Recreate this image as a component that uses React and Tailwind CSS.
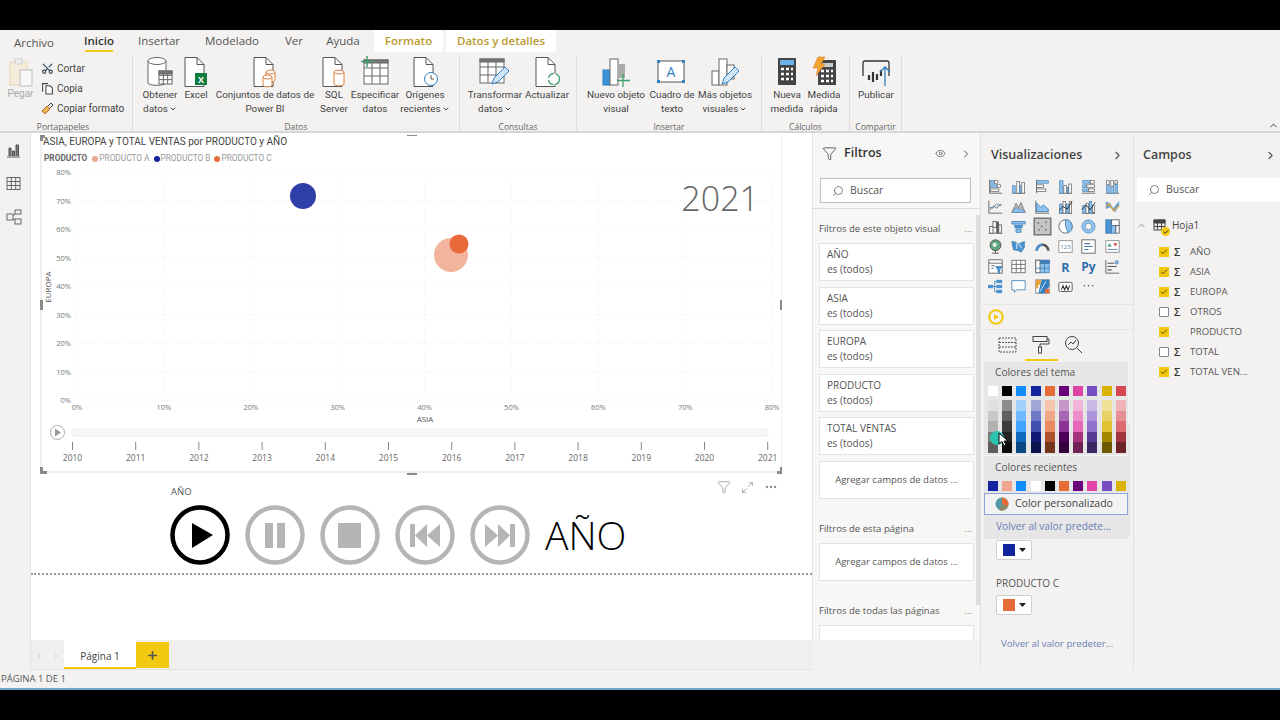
import { ChevronRight, ChevronUp, ChevronDown, Search, Filter, Eye, Check, Scissors, Plus, MoreHorizontal, Maximize2 } from 'lucide-react';

const font = { fontFamily: '"Open Sans", "Noto Sans", sans-serif' };
const narrow = { fontFamily: 'Roboto, "Open Sans", sans-serif' };

function Doc({ children }) {
  return (
    <svg width="36" height="32" viewBox="0 0 36 32" fill="none">
      <path d="M7 1.5h12l7 7v22H7z" fill="#fff" stroke="#555" />
      <path d="M19 1.5v7h7" stroke="#555" />
      {children}
    </svg>
  );
}

const Cyl = ({ x, y, w = 9, h = 11, c = '#d9803f' }) => (
  <g stroke={c} fill="#fff">
    <path d={`M${x} ${y + 2}v${h - 3}c0 2.5 ${w} 2.5 ${w} 0v-${h - 3}`} />
    <ellipse cx={x + w / 2} cy={y + 2} rx={w / 2} ry="2" />
  </g>
);

const TableGrid = ({ x = 4, y = 4, w = 24, h = 22 }) => (
  <g stroke="#666" fill="#fff">
    <rect x={x} y={y} width={w} height={h} />
    <path d={`M${x} ${y + h / 3}h${w}M${x} ${y + (2 * h) / 3}h${w}M${x + w / 3} ${y}v${h}M${x + (2 * w) / 3} ${y}v${h}`} />
    <rect x={x} y={y} width={w} height="3" fill="#777" />
  </g>
);

const Pencil = () => <path d="M15 28l2-6 11-11 4 4-11 11z" fill="#cfe4f7" stroke="#2f7fc1" />;

const Svg32 = ({ children }) => (
  <svg width="36" height="32" viewBox="0 0 36 32" fill="none">{children}</svg>
);

const ribbonIcons = {
  obtener: (
    <Svg32>
      <path d="M6 5v22c0 3 18 3 18 0V5" fill="#fff" stroke="#666" />
      <ellipse cx="15" cy="5" rx="9" ry="3.5" fill="#fff" stroke="#666" />
      <TableGrid x={17} y={15} w={13} h={13} />
    </Svg32>
  ),
  excel: (
    <Doc>
      <rect x="17" y="17" width="12" height="12" fill="#107c41" />
      <text x="23" y="26.5" textAnchor="middle" fontSize="9" fontWeight="700" fill="#fff">X</text>
    </Doc>
  ),
  conjuntos: <Doc><Cyl x={19} y={14} /><Cyl x={16} y={19} /></Doc>,
  sql: <Doc><Cyl x={18} y={14} w={10} h={15} /></Doc>,
  especificar: (
    <Svg32>
      <TableGrid x={7} y={4} w={24} h={24} />
      <path d="M10 0v11M4 5.500h12" stroke="#3fa06d" strokeWidth="1.500" />
    </Svg32>
  ),
  origenes: (
    <Doc>
      <circle cx="24" cy="23" r="6.500" fill="#fff" stroke="#2f7fc1" />
      <path d="M24 19v4h3" stroke="#555" />
    </Doc>
  ),
  transformar: <Svg32><TableGrid x={3} y={3} w={24} h={24} /><Pencil /></Svg32>,
  actualizar: (
    <Doc>
      <circle cx="25" cy="23" r="5.500" fill="#fff" stroke="#3fa06d" strokeDasharray="7 2" strokeWidth="1.300" />
    </Doc>
  ),
  nuevo: (
    <Svg32>
      <rect x="5" y="14" width="7" height="15" fill="#3d93d8" stroke="#2f7fc1" />
      <rect x="12" y="3" width="8" height="26" fill="#fff" stroke="#666" />
      <rect x="20" y="8" width="7" height="14" fill="#aaa" />
      <path d="M25 18v13M19 24.500h13" stroke="#3fa06d" strokeWidth="1.300" />
    </Svg32>
  ),
  cuadro: (
    <Svg32>
      <rect x="4" y="5" width="26" height="21" fill="#fff" stroke="#555" />
      <g fill="#2f7fc1"><rect x="3" y="4" width="3" height="3" /><rect x="28" y="4" width="3" height="3" /><rect x="3" y="24" width="3" height="3" /><rect x="28" y="24" width="3" height="3" /></g>
      <text x="17" y="21" textAnchor="middle" fontSize="14" fill="#2f7fc1">A</text>
    </Svg32>
  ),
  mas: (
    <Svg32>
      <rect x="5" y="15" width="7" height="14" fill="#fff" stroke="#666" />
      <rect x="12" y="3" width="8" height="26" fill="#fff" stroke="#666" />
      <rect x="20" y="9" width="7" height="14" fill="#fff" stroke="#666" />
      <Pencil />
    </Svg32>
  ),
  nueva: (
    <Svg32>
      <rect x="9" y="2" width="18" height="27" fill="#444" />
      <rect x="11" y="4" width="14" height="5" fill="#6cb2e8" />
      <path d="M12 13h3M17 13h3M22 13h2M12 18h3M17 18h3M22 18h2M12 23h3M17 23h3M22 23h2" stroke="#fff" strokeWidth="2.500" />
    </Svg32>
  ),
  medida: (
    <Svg32>
      <rect x="12" y="4" width="18" height="25" fill="#444" />
      <rect x="16" y="7" width="11" height="4" fill="#ccc" />
      <path d="M15 15h3M20 15h3M25 15h2M15 20h3M20 20h3M25 20h2M15 25h3M20 25h3M25 25h2" stroke="#fff" strokeWidth="2.500" />
      <path d="M12 1h7l-4 7h4l-9 12 2-8H7z" fill="#f2a52c" stroke="#d9803f" strokeWidth=".6" />
    </Svg32>
  ),
  publicar: (
    <Svg32>
      <path d="M5 20V7q0-2 2-2h22q2 0 2 2v13" stroke="#333" strokeWidth="1.300" />
      <path d="M11 24v-5M15 26v-10M19 24v-6M23 20v-6" stroke="#333" strokeWidth="2.200" />
      <path d="M27 30V12M22 16l5-5 5 5" stroke="#2f7fc1" strokeWidth="1.300" />
    </Svg32>
  ),
};

const groups = [
  { label: 'Datos', w: 'w-[327px]', pl: 'pl-[5px]', items: [
    { k: 'obtener', w: 'w-[44px]', t: ['Obtener', 'datos'], c: true },
    { k: 'excel', w: 'w-[28px]', t: ['Excel'] },
    { k: 'conjuntos', w: 'w-[110px]', t: ['Conjuntos de datos de', 'Power BI'] },
    { k: 'sql', w: 'w-[28px]', t: ['SQL', 'Server'] },
    { k: 'especificar', w: 'w-[54px]', t: ['Especificar', 'datos'] },
    { k: 'origenes', w: 'w-[46px]', t: ['Orígenes', 'recientes'], c: true },
  ] },
  { label: 'Consultas', w: 'w-[117px]', pl: 'pl-[4px]', items: [
    { k: 'transformar', w: 'w-[62px]', t: ['Transformar', 'datos'], c: true },
    { k: 'actualizar', w: 'w-[42px]', t: ['Actualizar'] },
  ] },
  { label: 'Insertar', w: 'w-[185px]', pl: 'pl-[6px]', items: [
    { k: 'nuevo', w: 'w-[66px]', t: ['Nuevo objeto', 'visual'] },
    { k: 'cuadro', w: 'w-[46px]', t: ['Cuadro de', 'texto'] },
    { k: 'mas', w: 'w-[60px]', t: ['Más objetos', 'visuales'], c: true },
  ] },
  { label: 'Cálculos', w: 'w-[88px]', pl: 'pl-[7px]', items: [
    { k: 'nueva', w: 'w-[36px]', t: ['Nueva', 'medida'] },
    { k: 'medida', w: 'w-[38px]', t: ['Medida', 'rápida'] },
  ] },
  { label: 'Compartir', w: 'w-[52px]', pl: 'pl-[4px]', items: [
    { k: 'publicar', w: 'w-[44px]', t: ['Publicar'] },
  ] },
];

function RibbonButton({ item }) {
  return (
    <div className={`${item.w} flex flex-col items-center shrink-0`}>
      <div className="h-[28px] mt-[3px] flex items-center justify-center">{ribbonIcons[item.k]}</div>
      <div className="mt-[2px] text-[9.900px] leading-[14px] text-[#444] text-center whitespace-nowrap" style={narrow}>
        {item.t.map((line, i) => (
          <div key={line} className="flex items-center justify-center">
            {line}
            {item.c && i === item.t.length - 1 && <ChevronDown className="w-[8px] h-[8px] ml-[1px]" strokeWidth={3} />}
          </div>
        ))}
      </div>
    </div>
  );
}

function RibbonGroup({ group }) {
  return (
    <div className={`${group.w} shrink-0 h-[77px] border-r border-[#dcdcdc] flex flex-col`}>
      <div className={`${group.pl} flex flex-1 items-start`}>
        {group.items.map(item => <RibbonButton key={item.k} item={item} />)}
      </div>
      <div className="text-center text-[8.500px] leading-[12px] text-[#666] translate-y-[1px]">{group.label}</div>
    </div>
  );
}

function Ribbon() {
  const tabs = [
    ['Archivo', 'w-[68px] text-[#555] pt-[3px]'],
    ['Inicio', 'w-[62px] text-[#333] font-semibold'],
    ['Insertar', 'w-[58px]'],
    ['Modelado', 'w-[88px]'],
    ['Ver', 'w-[36px]'],
    ['Ayuda', 'w-[62px]'],
  ];
  return (
    <div className="h-[103px] shrink-0 bg-[#f3f2f1] border-b-2 border-[#d6d6d6]">
      <div className="h-[22px] flex items-center text-[11.500px] text-[#555]">
        {tabs.map(([name, cls]) => (
          <div key={name} className={`${cls} relative h-full flex items-center justify-center`}>
            {name}
            {name === 'Inicio' && <div className="absolute bottom-[0px] left-[17px] w-[28px] h-[2px] bg-[#f2c811]" />}
          </div>
        ))}
        <div className="w-[69px] h-full bg-white flex items-center justify-center font-semibold text-[#b89a2d]">Formato</div>
        <div className="ml-[3px] w-[110px] h-full bg-white flex items-center justify-center font-semibold text-[#b89a2d]">Datos y detalles</div>
      </div>
      <div className="flex pt-[3px]">
        <div className="w-[133px] shrink-0 h-[77px] border-r border-[#dcdcdc] flex flex-col">
          <div className="flex flex-1">
            <div className="w-[41px] flex flex-col items-center pt-[3px]">
              <svg width="26" height="30" viewBox="0 0 26 30" fill="none">
                <rect x="2" y="4" width="17" height="23" fill="#f5ecdc" stroke="#e4d3b5" />
                <rect x="7" y="1" width="7" height="5" fill="#eee" stroke="#ccc" />
                <rect x="12" y="12" width="12" height="16" fill="#f7f7f7" stroke="#bbb" />
              </svg>
              <div className="text-[10px] leading-[14px] text-[#aaa] -mt-[1px]" style={narrow}>Pegar</div>
            </div>
            <div className="flex flex-col text-[10px] text-[#444] pt-[6px] gap-[6px]" style={narrow}>
              <div className="h-[14px] flex items-center gap-[3px]"><Scissors className="w-[13px] h-[13px] -rotate-90 text-[#345]" /><span>Cortar</span></div>
              <div className="h-[14px] flex items-center gap-[3px]">
                <svg width="13" height="13" viewBox="0 0 12 12" fill="none" stroke="#444"><path d="M1.500 9V1.500h5M4.500 3.500h4l2 2v5.500h-6z" fill="#fff" /></svg>
                <span>Copia</span>
              </div>
              <div className="h-[14px] flex items-center gap-[3px]">
                <svg width="13" height="13" viewBox="0 0 13 13" fill="none"><path d="M1 9l5-5 3 3-5 5z" fill="#f0b65a" stroke="#a86f1e" /><path d="M7 4l3-3 2 2-3 3" stroke="#444" /></svg>
                <span>Copiar formato</span>
              </div>
            </div>
          </div>
          <div className="text-center text-[8.500px] leading-[12px] text-[#666] pr-[6px] translate-y-[1px]">Portapapeles</div>
        </div>
        {groups.map(g => <RibbonGroup key={g.label} group={g} />)}
        <div className="flex-1 relative">
          <ChevronUp className="absolute right-[1px] bottom-[1px] w-[11px] h-[11px] text-[#333]" strokeWidth={2} />
        </div>
      </div>
    </div>
  );
}

function LeftRail() {
  return (
    <div className="w-[31px] shrink-0 bg-[#f3f2f1] border-r border-[#e3e3e3] flex flex-col items-center pt-[10px] pr-[3px] gap-[18px]">
      <svg width="15" height="15" viewBox="0 0 15 15" fill="none" stroke="#555"><path d="M1 14h13" /><path d="M3 13V5h2v8M6.500 13V8h2v5M10 13V2h2.500v11" fill="#777" /></svg>
      <svg width="15" height="15" viewBox="0 0 15 15" fill="none" stroke="#666"><rect x="1" y="1.500" width="13" height="12" /><path d="M1 5.500h13M1 9.500h13M5.300 1.500v12M9.700 1.500v12" /></svg>
      <svg width="16" height="16" viewBox="0 0 16 16" fill="none" stroke="#666"><rect x="9" y="1" width="6" height="4" /><rect x="1" y="5" width="6" height="6" /><rect x="9" y="10" width="6" height="5" /><path d="M7 7l2-2M7 9l2 2" /></svg>
    </div>
  );
}

const xTicks = ['0%', '10%', '20%', '30%', '40%', '50%', '60%', '70%', '80%'];
const yTicks = ['80%', '70%', '60%', '50%', '40%', '30%', '20%', '10%', '0%'];
const years = ['2010', '2011', '2012', '2013', '2014', '2015', '2016', '2017', '2018', '2019', '2020', '2021'];

function Chart() {
  return (
    <div className="relative ml-[9px] mt-[2px] w-[742px] h-[340px] shrink-0">
      <svg className="absolute inset-0" width="742" height="340" viewBox="40 135 742 340" fill="none" style={font}>
        <path d="M41 135V472H782V135" stroke="#dedede" />
        <path d="M40 135h5v3h-2v3h-3zM40 467h3v4h4v3h-7zM777 471h3v-4h3v7h-6zM407 133h10v3h-10zM407 473h10v3h-10zM40 300h3v10h-3zM780 300h3v10h-3z" fill="#8a8a8a" />
        {xTicks.map((t, i) => (
          <g key={t}>
            <path d={`M${77 + i * 86.9} 172V400`} stroke="#f0f0f0" strokeDasharray="1 2" />
            <text x={77 + i * 86.9} y="410" textAnchor="middle" fontSize="7.500" fill="#777">{t}</text>
          </g>
        ))}
        {yTicks.map((t, i) => (
          <g key={t}>
            <path d={`M77 ${172 + i * 28.5}H772`} stroke="#f0f0f0" strokeDasharray="1 2" />
            <text x="71" y={175 + i * 28.5} textAnchor="end" fontSize="7.500" fill="#777">{t}</text>
          </g>
        ))}
        <text x="425" y="422" textAnchor="middle" fontSize="8" fill="#555">ASIA</text>
        <text transform="translate(51 287) rotate(-90)" textAnchor="middle" fontSize="8" fill="#555">EUROPA</text>
        <circle cx="303" cy="196" r="13" fill="#2e3fa8" />
        <circle cx="451" cy="255" r="17" fill="#f2b49c" />
        <circle cx="459" cy="244" r="9.500" fill="#e8693a" />
        <text x="759" y="211" textAnchor="end" fontSize="34" fontWeight="300" fill="#666">2021</text>
        <circle cx="57.500" cy="432.500" r="7" fill="#fff" stroke="#aaa" />
        <path d="M55 428.500l6 4-6 4z" fill="#999" />
        <rect x="72" y="429" width="696" height="7" rx="3" fill="#f7f7f7" stroke="#ececec" />
        {years.map((y, i) => (
          <g key={y}>
            <path d={`M${72.500 + i * 63.200} 442v8`} stroke="#888" />
            <text x={72.500 + i * 63.200} y="461" textAnchor="middle" fontSize="8.500" fill="#666">{y}</text>
          </g>
        ))}
      </svg>
      <div className="relative pl-[3px] text-[10px] leading-[13px] text-[#444] whitespace-nowrap" style={narrow}>
        ASIA, EUROPA y TOTAL VENTAS por PRODUCTO y AÑO
      </div>
      <div className="relative pl-[4px] mt-[5px] flex items-center text-[8.300px] leading-[11px] text-[#999]" style={narrow}>
        <span className="font-bold text-[#666] mr-[5px]">PRODUCTO</span>
        <span className="w-[6px] h-[6px] rounded-full bg-[#e8a792] mr-[1px]" /><span className="mr-[4px]">PRODUCTO A</span>
        <span className="w-[6px] h-[6px] rounded-full bg-[#12239e] mr-[1px]" /><span className="mr-[4px]">PRODUCTO B</span>
        <span className="w-[6px] h-[6px] rounded-full bg-[#e66c37] mr-[1px]" /><span>PRODUCTO C</span>
      </div>
    </div>
  );
}

function Round({ color, children }) {
  return (
    <svg width="60" height="60" viewBox="0 0 60 60" fill="none">
      <circle cx="30" cy="30" r="27.500" fill="#fff" stroke={color} strokeWidth="4.500" />
      <g fill={color}>{children}</g>
    </svg>
  );
}

function Slicer() {
  return (
    <div className="relative">
      <div className="absolute left-[686px] top-[5px] flex items-center gap-[10px] text-[#888]">
        <Filter className="w-[14px] h-[14px]" strokeWidth={1.200} />
        <Maximize2 className="w-[13px] h-[13px]" strokeWidth={1.200} />
        <MoreHorizontal className="w-[14px] h-[14px]" />
      </div>
      <div className="ml-[140px] pt-[10px] text-[9.500px] leading-[14px] text-[#555]">AÑO</div>
      <div className="ml-[139px] mt-[6px] flex items-center gap-[15px] h-[60px]">
        <Round color="#000"><path d="M22 18l21 12-21 13z" /></Round>
        <Round color="#b5b5b5"><rect x="20" y="18" width="8" height="25" /><rect x="32" y="18" width="8" height="25" /></Round>
        <Round color="#b5b5b5"><rect x="18" y="18" width="23" height="25" /></Round>
        <Round color="#b5b5b5"><rect x="15" y="19" width="5" height="23" /><path d="M32 19v23l-12-11.500zM45 19v23l-13-11.500z" /></Round>
        <Round color="#b5b5b5"><rect x="40" y="19" width="5" height="23" /><path d="M28 19v23l12-11.500zM15 19v23l13-11.500z" /></Round>
        <span className="text-[39px] leading-none font-light text-black -translate-y-[1px]" style={font}>AÑO</span>
      </div>
      <div className="mt-[8px] border-t-2 border-dotted border-[#999]" />
    </div>
  );
}

function PageTabs() {
  return (
    <div className="h-[30px] shrink-0 bg-[#f0efee] flex items-stretch border-b border-[#e4e4e4]">
      <div className="w-[33px] flex items-center justify-center gap-[9px] text-[#ccc] pt-[3px]">
        <ChevronRight className="w-[8px] h-[8px] rotate-180" strokeWidth={3} />
        <ChevronRight className="w-[8px] h-[8px]" strokeWidth={3} />
      </div>
      <div className="w-[72px] bg-white border-b-2 border-[#f2c811] flex items-center justify-center pt-[5px] text-[10px] text-[#444]">Página 1</div>
      <div className="w-[33px] mt-[2px] mb-[1px] bg-[#f2c811] flex items-center justify-center">
        <Plus className="w-[13px] h-[13px] text-[#555]" strokeWidth={3} />
      </div>
    </div>
  );
}

function FilterCard({ title, add }) {
  if (add) {
    return <div className="h-[38px] shrink-0 bg-white border border-[#e3e3e3] flex items-center justify-center text-[9.500px] text-[#555] whitespace-nowrap">Agregar campos de datos ...</div>;
  }
  return (
    <div className="h-[38px] shrink-0 bg-white border border-[#e3e3e3] pl-[7px] pt-[3px] text-[10px] leading-[15px] text-[#555]">
      <div>{title}</div>
      <div>es (todos)</div>
    </div>
  );
}

const FilterHeading = ({ children }) => (
  <div className="flex justify-between pr-[2px] h-[14px] items-center text-[9.600px] text-[#555] whitespace-nowrap">
    {children}
    <span className="text-[#888]">...</span>
  </div>
);

function FiltersPane() {
  return (
    <div className="w-[168px] shrink-0 border-l border-[#e3e3e3] bg-[#f7f7f6] flex flex-col h-[507px] relative">
      <div className="h-[40px] shrink-0 flex items-center pl-[9px] pr-[8px] pt-[1px]">
        <Filter className="w-[15px] h-[15px] text-[#444]" strokeWidth={1.300} />
        <span className="ml-[7px] text-[12.500px] font-semibold text-[#333] flex-1">Filtros</span>
        <Eye className="w-[11px] h-[11px] text-[#777] mr-[14px]" />
        <ChevronRight className="w-[12px] h-[12px] text-[#555]" />
      </div>
      <div className="ml-[7px] w-[151px] h-[25px] shrink-0 mt-[5px] bg-white border border-[#bdbdbd] flex items-center pl-[11px] text-[10.500px] text-[#555]">
        <Search className="w-[12px] h-[12px] -scale-x-100 mr-[6px] text-[#444]" strokeWidth={1.300} />Buscar
      </div>
      <div className="mt-[5px] border-t border-[#d9d9d9]" />
      <div className="pl-[6px] pr-[6px] overflow-hidden flex-1">
        <div className="mt-[13px]"><FilterHeading>Filtros de este objeto visual</FilterHeading></div>
        <div className="mt-[7px] flex flex-col gap-[5.600px]">
          {['AÑO', 'ASIA', 'EUROPA', 'PRODUCTO', 'TOTAL VENTAS'].map(t => <FilterCard key={t} title={t} />)}
          <FilterCard add />
        </div>
        <div className="mt-[23px]"><FilterHeading>Filtros de esta página</FilterHeading></div>
        <div className="mt-[7px]"><FilterCard add /></div>
        <div className="mt-[23px]"><FilterHeading>Filtros de todas las páginas</FilterHeading></div>
        <div className="mt-[7px]"><FilterCard add /></div>
      </div>
      <div className="absolute right-[0px] top-[82px] w-[4px] h-[390px] bg-[#dedede]" />
    </div>
  );
}

const B = '#8fc2ee';
const BD = '#3f7fb5';
const G = '#555';
const Bar = ({ x, y, w, h, on = true }) => (
  <rect x={x} y={y} width={w} height={h} fill={on ? B : '#fff'} stroke={on ? BD : G} strokeWidth=".8" />
);
const vizIcons = [
  <g><path d="M2 1v16h15" stroke={G} /><Bar x={3} y={2} w={5} h={3} /><Bar x={8} y={2} w={4} h={3} on={false} /><Bar x={3} y={7} w={8} h={3} /><Bar x={11} y={7} w={4} h={3} on={false} /><Bar x={3} y={12} w={10} h={3} on={false} /></g>,
  <g><path d="M1 17h16" stroke={G} /><Bar x={2} y={8} w={3} h={9} /><Bar x={7} y={3} w={3} h={14} on={false} /><Bar x={10} y={8} w={2} h={9} /><Bar x={13} y={4} w={3} h={13} on={false} /></g>,
  <g><path d="M2 1v16" stroke={G} /><Bar x={2} y={2} w={14} h={3} /><Bar x={2} y={7} w={8} h={3} on={false} /><Bar x={2} y={12} w={11} h={3} on={false} /></g>,
  <g><path d="M1 17h16" stroke={G} /><Bar x={2} y={2} w={4} h={15} /><Bar x={7} y={8} w={3} h={9} on={false} /><Bar x={11} y={10} w={2} h={7} /><Bar x={13} y={6} w={3} h={11} on={false} /></g>,
  <g><path d="M1 17h16" stroke={G} /><Bar x={2} y={2} w={9} h={3} /><Bar x={11} y={2} w={5} h={3} on={false} /><Bar x={2} y={7} w={5} h={3} /><Bar x={7} y={7} w={9} h={3} on={false} /><Bar x={2} y={12} w={7} h={3} /><Bar x={9} y={12} w={7} h={3} on={false} /></g>,
  <g><path d="M1 17h16" stroke={G} /><Bar x={2} y={7} w={3} h={10} /><Bar x={2} y={2} w={3} h={5} on={false} /><Bar x={7} y={9} w={3} h={8} /><Bar x={7} y={2} w={3} h={7} on={false} /><Bar x={12} y={6} w={3} h={11} /><Bar x={12} y={2} w={3} h={4} on={false} /></g>,
  <g fill="none"><path d="M1 2v15h16" stroke={G} /><path d="M2 13l5-5 3 3 6-5" stroke={G} /><path d="M2 10l4 1 4-5 6 2" stroke={BD} /></g>,
  <g><path d="M1 16l5-11 3 5 3-6 5 12z" fill="#b9b9b9" stroke={G} strokeWidth=".7" /><path d="M1 16l5-6 4 3 3-1 4 4z" fill={B} stroke={BD} strokeWidth=".7" /></g>,
  <g fill="none"><path d="M1 2v15h16" stroke={G} /><path d="M2 5l5 5 3-3 6 5v3H2z" fill={B} stroke={BD} /></g>,
  <g><path d="M1 17h16" stroke={G} /><Bar x={2} y={6} w={3} h={11} /><Bar x={6} y={3} w={3} h={14} on={false} /><Bar x={10} y={6} w={3} h={11} /><Bar x={14} y={3} w={2} h={14} on={false} /><path d="M1 14l5-5 5 3 6-9" stroke="#222" fill="none" /></g>,
  <g><path d="M1 17h16" stroke={G} /><Bar x={2} y={8} w={3} h={9} /><Bar x={6} y={5} w={3} h={12} on={false} /><Bar x={10} y={3} w={3} h={14} /><Bar x={14} y={8} w={2} h={9} on={false} /><path d="M1 13l5-6 5 6 6-9" stroke="#222" fill="none" /></g>,
  <g><path d="M1 3l5 2 4 6 7-9v6l-5 8-6-6-5 2z" fill="#5f9fd6" /><path d="M1 9l4-3 5 8 7-6" stroke="#e8a33a" fill="none" strokeWidth="1.500" /></g>,
  <g><path d="M1 17h16" stroke={G} /><rect x="2" y="9" width="4" height="8" fill="#fff" stroke={G} /><rect x="6" y="3" width="4" height="7" fill="#fff" stroke={G} /><rect x="10" y="3" width="3" height="14" fill={G} /><rect x="13" y="7" width="3" height="10" fill="#fff" stroke={G} /></g>,
  <g><path d="M1 3h16v3H1z" fill={B} stroke={BD} /><path d="M3.500 7h11l-1 4h-9z" fill="#4a93d0" /><path d="M6 12h6v4H6z" fill={B} stroke={BD} /></g>,
  <g><rect x="-1" y="-1" width="20" height="20" fill="#c4c4c4" stroke="#666" strokeWidth="1.500" /><g fill="#777"><rect x="3" y="4" width="2" height="2" /><rect x="7" y="8" width="2" height="2" /><rect x="12" y="3" width="2" height="2" /><rect x="4" y="12" width="2" height="2" /><rect x="12" y="12" width="2" height="2" /></g></g>,
  <g><circle cx="9" cy="9" r="8" fill="#fff" stroke={G} /><path d="M9 9V1a8 8 0 0 1 3 15.400z" fill={B} stroke={BD} /></g>,
  <g fill="none"><circle cx="9" cy="9" r="6" stroke={B} strokeWidth="3.500" /><circle cx="9" cy="9" r="8" stroke={BD} strokeWidth=".8" /><circle cx="9" cy="9" r="4" stroke={BD} strokeWidth=".8" /></g>,
  <g><rect x="1" y="1" width="7" height="16" fill="#4a93d0" stroke={BD} /><rect x="8" y="1" width="9" height="7" fill="#fff" stroke={G} /><rect x="8" y="8" width="5" height="9" fill={B} stroke={BD} /><rect x="13" y="8" width="4" height="9" fill="#fff" stroke={G} /></g>,
  <g><circle cx="9" cy="7.500" r="6.500" fill="#5fa77f" stroke="#444" /><path d="M5 17h8M9 14v3" stroke="#444" /><circle cx="8" cy="7" r="2.500" fill="#eee" /></g>,
  <g><path d="M1 3l5 1 3 2 7-3v7l-4 6-3-2-6-1z" fill="#4a93d0" stroke={BD} /><path d="M7 4v8M9 6l4 5" stroke="#fff" /></g>,
  <g fill="none"><path d="M2 14a7 7 0 0 1 14 0" stroke="#555" strokeWidth="3" /><path d="M2 14a7 7 0 0 1 7-7" stroke="#4a93d0" strokeWidth="3" /></g>,
  <g><rect x="1" y="2" width="16" height="14" fill="#fff" stroke="#888" /><text x="9" y="12" textAnchor="middle" fontSize="7" fill="#4a7ca8">123</text></g>,
  <g fill="none" stroke={G}><rect x="1" y="1" width="16" height="16" fill="#fff" /><path d="M4 5.500h7M4 9h10M4 12.500h5" stroke="#4a7ca8" strokeWidth="1.300" /></g>,
  <g><rect x="1" y="2" width="16" height="14" fill="#fff" stroke="#888" /><path d="M3 9l2.500-4L8 9z" fill="#3fa06d" /><path d="M10 5h5l-2.500 4z" fill="#d64550" /><path d="M3 12.500h12" stroke="#4a7ca8" /></g>,
  <g fill="none" stroke={G}><rect x="1" y="1" width="16" height="16" fill="#fff" /><path d="M1 5h16M4 8h4M4 11h3" /><path d="M9 9h8l-3 4v4l-2-1v-3z" fill="#4a93d0" stroke={BD} /></g>,
  <g fill="#fff" stroke="#666"><rect x="1" y="1.500" width="16" height="15" /><path d="M1 6.500h16M1 11.500h16M6.300 1.500v15M11.700 1.500v15" /></g>,
  <g fill="none" stroke={BD}><rect x="1" y="1.500" width="16" height="15" fill={B} /><rect x="1" y="1.500" width="16" height="4" fill="#3f7fb5" /><rect x="1" y="1.500" width="5" height="15" fill="#fff" stroke="#666" /><path d="M1 11h16M11.500 2v15" /></g>,
  <text x="9" y="15" textAnchor="middle" fontSize="15" fontWeight="700" fill="#2f6fb0">R</text>,
  <text x="9" y="14" textAnchor="middle" fontSize="14.500" fontWeight="700" fill="#2f6fb0">Py</text>,
  <g fill="none"><path d="M1 1v16h16" stroke={G} /><path d="M3 5h8M3 9h11M3 13h5" stroke={G} strokeWidth="1.300" /><circle cx="14" cy="4" r="2" fill={B} stroke={BD} /></g>,
  <g fill="#4a93d0"><rect x="0" y="7" width="6" height="4" /><rect x="10" y="1" width="7" height="4" /><rect x="10" y="7" width="7" height="4" /><rect x="10" y="13" width="7" height="4" /><path d="M6 9h4M8 3v12M8 3h2M8 15h2" stroke={BD} fill="none" /></g>,
  <g><path d="M1 2h16v11H7l-3 3v-3H1z" fill="#fff" stroke={BD} /></g>,
  <g><rect x="1" y="1" width="16" height="16" fill="#fff" stroke="#777" /><path d="M1 1h6v6H4v4H1z" fill="#e8a33a" /><path d="M8 1h9v8l-6 8H4z" fill="#2f7fc1" /><path d="M13 3l-7 12" stroke="#fff" /><rect x="12" y="12" width="5" height="5" fill="#e8693a" /></g>,
  <g><rect x="1" y="4" width="16" height="11" rx="2" fill="#fff" stroke="#444" /><path d="M4 13l2-5 2 5 2-5 2 5 2-5" stroke="#333" strokeWidth="1.300" fill="none" /></g>,
  <g fill="#444"><circle cx="4" cy="8" r=".9" /><circle cx="9" cy="8" r=".9" /><circle cx="14" cy="8" r=".9" /></g>,
];

const themeTop = ['bg-[#ffffff]', 'bg-[#000000]', 'bg-[#118dff]', 'bg-[#12239e]', 'bg-[#e66c37]', 'bg-[#6b007b]', 'bg-[#e044a7]', 'bg-[#744ec2]', 'bg-[#d9b300]', 'bg-[#d64550]'];
const themeShades = [
  ['bg-[#e0e0e0]', 'bg-[#c8c8c8]', 'bg-[#b0b0b0]', 'bg-[#7a7a7a]', 'bg-[#5e5e5e]'],
  ['bg-[#8c8c8c]', 'bg-[#5f5f5f]', 'bg-[#3a3a3a]', 'bg-[#222222]', 'bg-[#0c0c0c]'],
  ['bg-[#a0d1ff]', 'bg-[#70bbff]', 'bg-[#41a4ff]', 'bg-[#0d6abf]', 'bg-[#094780]'],
  ['bg-[#a0a7d8]', 'bg-[#7079c5]', 'bg-[#414fb1]', 'bg-[#0e1a76]', 'bg-[#0a124f]'],
  ['bg-[#f5c4af]', 'bg-[#f0a787]', 'bg-[#eb895f]', 'bg-[#ac5129]', 'bg-[#73361c]'],
  ['bg-[#c499ca]', 'bg-[#a666b0]', 'bg-[#893395]', 'bg-[#50005c]', 'bg-[#36003e]'],
  ['bg-[#f3b4dc]', 'bg-[#ec8fca]', 'bg-[#e669b9]', 'bg-[#a8337d]', 'bg-[#702254]'],
  ['bg-[#c7b8e7]', 'bg-[#ac95da]', 'bg-[#9071ce]', 'bg-[#573b92]', 'bg-[#3a2761]'],
  ['bg-[#f0e199]', 'bg-[#e8d166]', 'bg-[#e1c233]', 'bg-[#a38700]', 'bg-[#6d5a00]'],
  ['bg-[#efb5b9]', 'bg-[#e68f96]', 'bg-[#de6a73]', 'bg-[#a1343c]', 'bg-[#6b2328]'],
];
const recent = ['bg-[#12239e]', 'bg-[#f0a58e]', 'bg-[#118dff]', 'bg-[#ffffff]', 'bg-[#000000]', 'bg-[#e66c37]', 'bg-[#6b007b]', 'bg-[#e044a7]', 'bg-[#744ec2]', 'bg-[#d9b300]'];

function ColorPicker() {
  return (
    <div className="absolute left-[3px] top-[229px] w-[144px] h-[177px] bg-[#e6e6e6] z-10 text-[10.200px] text-[#555]">
      <div className="h-[22px] pl-[11px] flex items-center">Colores del tema</div>
      <div className="pl-[2px] grid grid-cols-10 pt-[2px]">
        {themeTop.map(c => <div key={c} className="flex justify-center"><div className={`${c} w-[10px] h-[10px]`} /></div>)}
      </div>
      <div className="pl-[2px] grid grid-cols-10 pt-[4px]">
        {themeShades.map(col => (
          <div key={col[0]} className="flex flex-col items-center">
            {col.map(c => <div key={c} className={`${c} w-[10px] h-[10.500px]`} />)}
          </div>
        ))}
      </div>
      <div className="mt-[2px] border-t border-[#f5f5f5] h-[26px] pl-[11px] flex items-center">Colores recientes</div>
      <div className="pl-[2px] grid grid-cols-10">
        {recent.map(c => <div key={c} className="flex justify-center"><div className={`${c} w-[10px] h-[10px]`} /></div>)}
      </div>
      <div className="mt-[2px] h-[22px] bg-[#f2f2f2] border border-[#8fa3d9] flex items-center pl-[10px] text-[10.500px] text-[#444]">
        <svg width="14" height="14" viewBox="0 0 14 14" className="mr-[6px]">
          <circle cx="7" cy="7" r="6.500" fill="#4f9aa6" />
          <path d="M7 7V.500a6.500 6.500 0 0 1 6 9z" fill="#e66c37" />
          <path d="M7 7l6 2.500A6.500 6.500 0 0 1 4 13z" fill="#8a8a6a" />
        </svg>
        Color personalizado
      </div>
      <div className="h-[24px] pl-[12px] flex items-center text-[#6b7fb8]">Volver al valor predete...</div>
      <div className="absolute left-[6px] top-[69px] w-[14px] h-[14px] rounded-full bg-[#2fc4b2]" />
      <svg className="absolute left-[14px] top-[70px]" width="11" height="15" viewBox="0 0 11 15"><path d="M1 1v11l3-2.500 2 4.500 2-1-2-4h4z" fill="#fff" stroke="#000" /></svg>
    </div>
  );
}

const Swatch = ({ color }) => (
  <div className="w-[36px] h-[20px] bg-white border border-[#cfcfcf] rounded-[2px] flex items-center justify-center gap-[4px]">
    <div className={`w-[12px] h-[12px] ${color}`} />
    <svg width="7" height="4" viewBox="0 0 7 4"><path d="M0 0h7L3.500 4z" fill="#222" /></svg>
  </div>
);

function VizPane() {
  return (
    <div className="w-[153px] shrink-0 bg-[#f3f2f1] border-l border-[#e3e3e3] relative">
      <div className="h-[44px] flex items-center justify-between pl-[10px] pr-[9px]">
        <span className="text-[12.500px] font-semibold text-[#444]">Visualizaciones</span>
        <ChevronRight className="w-[13px] h-[13px] text-[#555]" />
      </div>
      <div className="ml-[3px] w-[140px] grid grid-cols-6 auto-rows-[20px] mt-[-1px]">
        {vizIcons.map((icon, i) => (
          <div key={i} className="flex items-center justify-center">
            <svg width="15" height="15" viewBox="0 0 18 18" fill="none" className="overflow-visible" style={font}>{icon}</svg>
          </div>
        ))}
      </div>
      <div className="mt-[8px] h-[26px] border-y border-[#e6e6e6] flex items-center pl-[7px]">
        <svg width="16" height="16" viewBox="0 0 16 16" fill="none"><circle cx="8" cy="8" r="6.800" stroke="#f2c811" strokeWidth="2" /><path d="M6 5l5 3-5 3z" fill="#f2c811" /></svg>
      </div>
      <div className="h-[29px] flex items-center pl-[17px] gap-[14px]">
        <svg width="19" height="18" viewBox="0 0 19 18" fill="none" stroke="#555" strokeDasharray="2 1"><rect x="1" y="2" width="17" height="14" /><path d="M1 6.500h17M1 11h17" /></svg>
        <svg width="19" height="19" viewBox="0 0 19 19" fill="none" stroke="#444"><rect x="2" y="1.500" width="14" height="5" /><path d="M16 4h2v5H9v3" /><rect x="7.500" y="12" width="3" height="6" /></svg>
        <svg width="19" height="19" viewBox="0 0 19 19" fill="none" stroke="#444"><circle cx="8" cy="8" r="6.500" /><path d="M13 13l5 5M4 10l3-3 2 2 3-4" /></svg>
      </div>
      <div className="ml-[44px] w-[33px] h-[2px] bg-[#f2c811]" />
      <ColorPicker />
      <div className="absolute right-[3px] top-[292px] w-[5px] h-[112px] bg-[#e4e4e4]" />
      <div className="pl-[15px] pt-[180px] text-[10px] text-[#555]">
        <div className="-mt-[1px]"><Swatch color="bg-[#12239e]" /></div>
        <div className="mt-[16px] leading-[14px]">PRODUCTO C</div>
        <div className="mt-[5px]"><Swatch color="bg-[#e66c37]" /></div>
        <div className="mt-[22px] pl-[5px] text-[9.600px] text-[#6b7fb8] whitespace-nowrap">Volver al valor predeter...</div>
      </div>
    </div>
  );
}

const fields = [
  ['AÑO', true, true], ['ASIA', true, true], ['EUROPA', true, true], ['OTROS', false, true],
  ['PRODUCTO', true, false], ['TOTAL', false, true], ['TOTAL VEN...', true, true],
];

function FieldsPane() {
  return (
    <div className="flex-1 bg-[#f3f2f1] border-l border-[#e3e3e3]">
      <div className="h-[45px] flex items-center justify-between pl-[9px] pr-[3px]">
        <span className="text-[12.500px] font-semibold text-[#444]">Campos</span>
        <ChevronRight className="w-[13px] h-[13px] text-[#555]" />
      </div>
      <div className="ml-[3px] h-[24px] bg-white flex items-center pl-[11px] text-[10.500px] text-[#555]">
        <Search className="w-[12px] h-[12px] -scale-x-100 mr-[6px] text-[#444]" strokeWidth={1.300} />Buscar
      </div>
      <div className="mt-[11px] h-[24px] flex items-center pl-[2px] text-[10px] text-[#444]">
        <ChevronUp className="w-[11px] h-[11px] text-[#888]" />
        <div className="relative ml-[6px] mr-[6px]">
          <svg width="13" height="12" viewBox="0 0 13 12" fill="none" stroke="#444"><rect x="1" y="1" width="11" height="10" /><path d="M1 1h11v3H1z" fill="#444" /><path d="M1 7.500h11M4.500 4v7M8.500 4v7" /></svg>
          <div className="absolute -right-[4px] -bottom-[5px] w-[9px] h-[9px] rounded-full bg-[#f2c811] flex items-center justify-center">
            <Check className="w-[6px] h-[6px] text-[#333]" strokeWidth={4} />
          </div>
        </div>
        Hoja1
      </div>
      <div className="mt-[5px] flex flex-col">
        {fields.map(([name, on, sum]) => (
          <div key={name} className="h-[20px] flex items-center pl-[25px] text-[9.600px] text-[#555] whitespace-nowrap">
            {on ? (
              <div className="w-[10px] h-[10px] bg-[#f2c811] flex items-center justify-center"><Check className="w-[8px] h-[8px] text-[#5a4a00]" strokeWidth={3} /></div>
            ) : (
              <div className="w-[10px] h-[10px] bg-white border border-[#888] rounded-[1px]" />
            )}
            <span className="w-[21px] pl-[5px] text-left text-[11px] text-[#333] font-semibold">{sum ? 'Σ' : ''}</span>
            <span>{name}</span>
          </div>
        ))}
      </div>
    </div>
  );
}

export default function App() {
  return (
    <div className="w-[1280px] h-[720px] bg-black flex flex-col overflow-hidden" style={font}>
      <div className="h-[30px] shrink-0" />
      <div className="h-[658px] shrink-0 flex flex-col bg-[#f3f2f1]">
        <Ribbon />
        <div className="flex h-[537px] shrink-0">
          <LeftRail />
          <div className="w-[781px] shrink-0 flex flex-col">
            <div className="h-[507px] shrink-0 bg-white overflow-hidden">
              <Chart />
              <Slicer />
            </div>
            <PageTabs />
          </div>
          <FiltersPane />
          <VizPane />
          <FieldsPane />
        </div>
        <div className="flex-1 flex items-center pl-[1px] pt-[1px] text-[9.500px] text-[#555]">PÁGINA 1 DE 1</div>
      </div>
      <div className="h-[2px] shrink-0 bg-[#6fa8c9]" />
    </div>
  );
}
